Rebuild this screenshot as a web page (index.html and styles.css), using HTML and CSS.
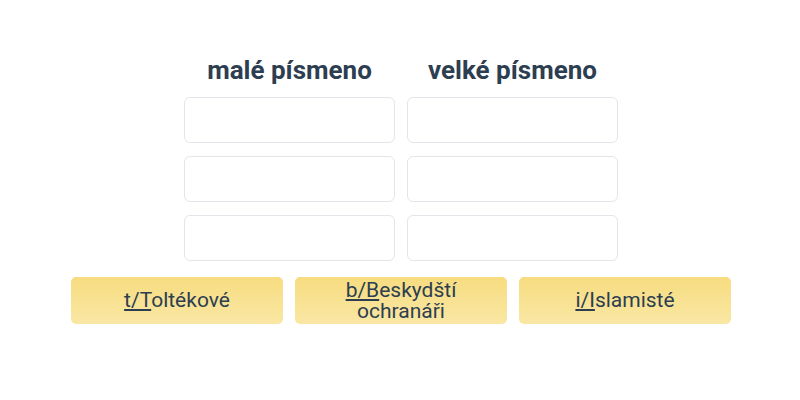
FILE: index.html
```html
<!DOCTYPE html>
<html lang="cs">
<head>
<meta charset="utf-8">
<link rel="stylesheet" href="styles.css">
</head>
<body>
<main class="page">
  <div class="grid">
    <h2 class="head">malé písmeno</h2>
    <h2 class="head">velké písmeno</h2>
    <input class="box" type="text">
    <input class="box" type="text">
    <input class="box" type="text">
    <input class="box" type="text">
    <input class="box" type="text">
    <input class="box" type="text">
  </div>
  <div class="buttons">
    <button class="btn"><span class="key">t/T</span>oltékové</button>
    <button class="btn"><span class="key">b/B</span>eskydští ochranáři</button>
    <button class="btn"><span class="key">i/I</span>slamisté</button>
  </div>
</main>
</body>
</html>
```
FILE: styles.css
```css
* { box-sizing: border-box; }
html, body { margin: 0; padding: 0; background: #fff; }
body { font-family: Roboto, "Noto Sans", sans-serif; color: #2c3e50; }
.page {
  width: 800px;
  height: 400px;
  display: flex;
  flex-direction: column;
  align-items: center;
  padding-top: 54px;
}
.grid {
  display: grid;
  grid-template-columns: 211px 211px;
  column-gap: 12px;
  row-gap: 13px;
  margin-left: 2px;
}
.head {
  margin: 0 0 -2px;
  font-size: 26px;
  font-weight: 700;
  line-height: 32px;
  text-align: center;
  color: #2c3e50;
}
.box {
  height: 46px;
  border: 1px solid #e2e6ea;
  border-radius: 6px;
  background: #fff;
  outline: none;
}
.buttons {
  display: flex;
  gap: 12px;
  margin-top: 16px;
  margin-left: 2px;
}
.btn {
  width: 212px;
  height: 47px;
  border: none;
  border-radius: 5px;
  background: linear-gradient(#f7dc80, #f9e7a4);
  font-family: Roboto, "Noto Sans", sans-serif;
  font-size: 21px;
  line-height: 21px;
  color: #2c3e50;
  padding: 0 40px;
  text-align: center;
}
.key { text-decoration: underline; }
```
